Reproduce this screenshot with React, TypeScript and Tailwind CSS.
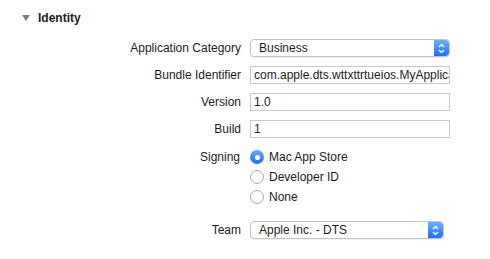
import React from 'react'

const Stepper = () => (
  <div className="flex h-full w-[15px] items-center justify-center rounded-r-[4px] bg-gradient-to-b from-[#6cb0fb] to-[#1a6ff3]">
    <svg width="7" height="11" viewBox="0 0 7 11" fill="none">
      <path d="M1 4L3.5 1.5L6 4" stroke="white" strokeWidth="1.3" />
      <path d="M1 7L3.5 9.5L6 7" stroke="white" strokeWidth="1.3" />
    </svg>
  </div>
)

const PopUp = ({ value, width }: { value: string; width: string }) => (
  <div
    className={`flex h-[18px] ${width} items-center rounded-[4px] border border-[#c3c3c3] bg-white shadow-[0_1px_0_rgba(0,0,0,0.05)]`}
  >
    <span className="flex-1 truncate pl-[8px] leading-[16px]">{value}</span>
    <Stepper />
  </div>
)

const TextField = ({ value }: { value: string }) => (
  <div className="flex h-[18px] w-[200px] items-center overflow-hidden whitespace-nowrap border border-[#c8c8c8] bg-white pl-[3px] leading-[16px]">
    {value}
  </div>
)

const Radio = ({ checked, label }: { checked?: boolean; label: string }) => (
  <div className="flex h-[20px] items-center gap-[5px]">
    {checked ? (
      <div className="flex h-[14px] w-[14px] items-center justify-center rounded-full bg-gradient-to-b from-[#65aaf9] to-[#1b6ff2]">
        <div className="h-[5px] w-[5px] rounded-full bg-white" />
      </div>
    ) : (
      <div className="h-[14px] w-[14px] rounded-full border border-[#a9a9a9] bg-white" />
    )}
    <span>{label}</span>
  </div>
)

const Row = ({ label, children, className = '' }: { label: string; children: React.ReactNode; className?: string }) => (
  <div className={`flex items-start ${className}`}>
    <div className="flex h-[18px] w-[241px] shrink-0 items-center justify-end">{label}</div>
    <div className="ml-[9px]">{children}</div>
  </div>
)

export default function App() {
  return (
    <div className="h-[259px] w-[490px] overflow-hidden bg-white font-['Liberation_Sans',Arial,sans-serif] text-[12px] text-[#1c1c1c]">
      <div className="mt-[10px] flex h-[16px] items-center pl-[22px]">
        <svg width="8" height="6" viewBox="0 0 8 6">
          <path d="M0 0H8L4 6Z" fill="#7b7b7b" />
        </svg>
        <span className="ml-[8px] font-bold leading-[16px]">Identity</span>
      </div>

      <Row label="Application Category" className="mt-[13px]">
        <PopUp value="Business" width="w-[200px]" />
      </Row>
      <Row label="Bundle Identifier" className="mt-[9px]">
        <TextField value="com.apple.dts.wttxttrtueios.MyApplication" />
      </Row>
      <Row label="Version" className="mt-[9px]">
        <TextField value="1.0" />
      </Row>
      <Row label="Build" className="mt-[9px]">
        <TextField value="1" />
      </Row>

      <div className="mt-[9px] flex items-start">
        <div className="flex h-[20px] w-[240px] shrink-0 items-center justify-end">Signing</div>
        <div className="ml-[10px] flex flex-col">
          <Radio checked label="Mac App Store" />
          <Radio label="Developer ID" />
          <Radio label="None" />
        </div>
      </div>

      <Row label="Team" className="mt-[14px]">
        <PopUp value="Apple Inc. - DTS" width="w-[194px]" />
      </Row>
    </div>
  )
}
